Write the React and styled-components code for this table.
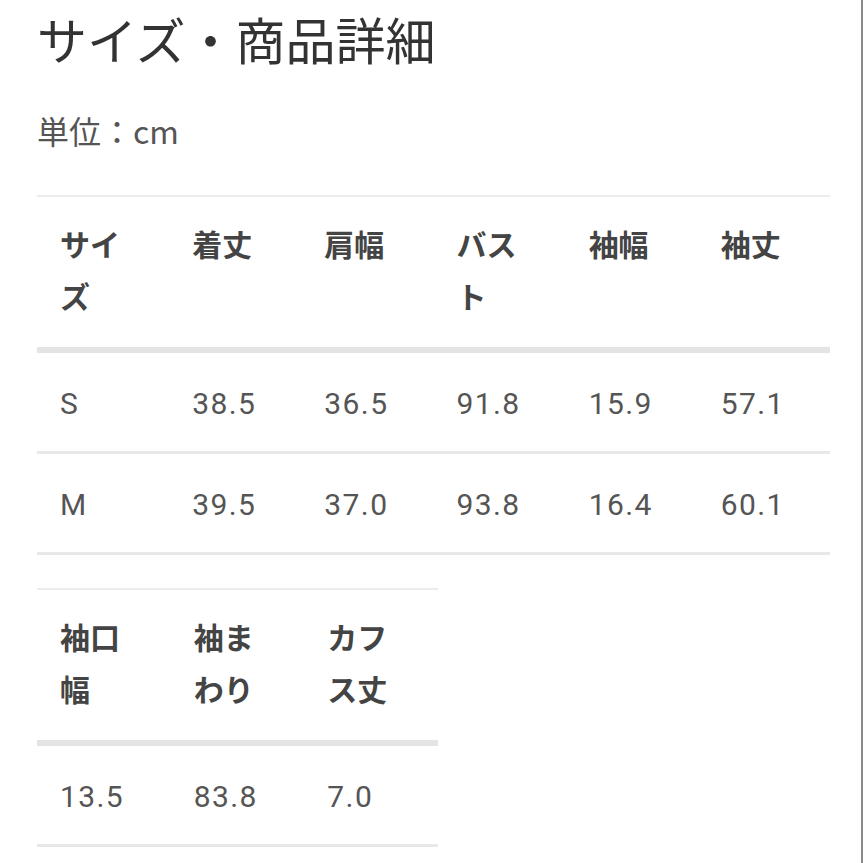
import styled, { createGlobalStyle } from 'styled-components'

const GlobalStyle = createGlobalStyle`
	html, body {
		margin: 0;
		padding: 0;
		background: #fff;
	}
	body {
		font-family: Roboto, "Noto Sans CJK JP", sans-serif;
	}
`

const Page = styled.div`
	box-sizing: border-box;
	width: 863px;
	min-height: 100vh;
	padding: 13px 0 0 37px;
	border-right: 2px solid #8a8a8a;
	overflow: hidden;
`

const Title = styled.h1`
	margin: 0;
	font-family: "Noto Sans CJK JP", sans-serif;
	font-size: 50px;
	line-height: 50px;
	font-weight: 400;
	color: #333;
`

const Unit = styled.p`
	margin: 51px 0 0;
	font-family: "Noto Sans CJK JP", sans-serif;
	font-size: 32px;
	line-height: 32px;
	color: #555;
`

const Table = styled.table`
	width: ${(props) => props.width}px;
	margin-top: ${(props) => props.gap}px;
	border-collapse: collapse;
	table-layout: fixed;
	border-top: 2px solid #ececec;
`

const Th = styled.th`
	padding: 20px 23px 26px;
	border-bottom: 6px solid #e4e4e4;
	text-align: left;
	vertical-align: top;
	font-family: "Noto Sans CJK JP", sans-serif;
	font-size: 30px;
	line-height: 52px;
	font-weight: 700;
	color: #444;
`

const Td = styled.td`
	padding: 25px 23px 21px;
	border-bottom: 3px solid #e8e8e8;
	text-align: left;
	font-family: Roboto, "Noto Sans CJK JP", sans-serif;
	font-size: 30px;
	line-height: 52px;
	font-weight: 400;
	letter-spacing: 1.4px;
	color: #555;
`

const mainHead = ['サイズ', '着丈', '肩幅', 'バスト', '袖幅', '袖丈']
const mainRows = [
	['S', '38.5', '36.5', '91.8', '15.9', '57.1'],
	['M', '39.5', '37.0', '93.8', '16.4', '60.1'],
]

const subHead = ['袖口幅', '袖まわり', 'カフス丈']
const subRows = [['13.5', '83.8', '7.0']]

function SizeTable({ head, rows, width, gap }) {
	return (
		<Table width={width} gap={gap}>
			<thead>
				<tr>
					{head.map((h) => <Th key={h}>{h}</Th>)}
				</tr>
			</thead>
			<tbody>
				{rows.map((row, i) => (
					<tr key={i}>
						{row.map((v, j) => <Td key={j}>{v}</Td>)}
					</tr>
				))}
			</tbody>
		</Table>
	)
}

export default function App() {
	return (<>
		<GlobalStyle />
		<Page>
			<Title>サイズ・商品詳細</Title>
			<Unit>単位：cm</Unit>
			<SizeTable head={mainHead} rows={mainRows} width={793} gap={49} />
			<SizeTable head={subHead} rows={subRows} width={401} gap={33} />
		</Page>
	</>)
}
